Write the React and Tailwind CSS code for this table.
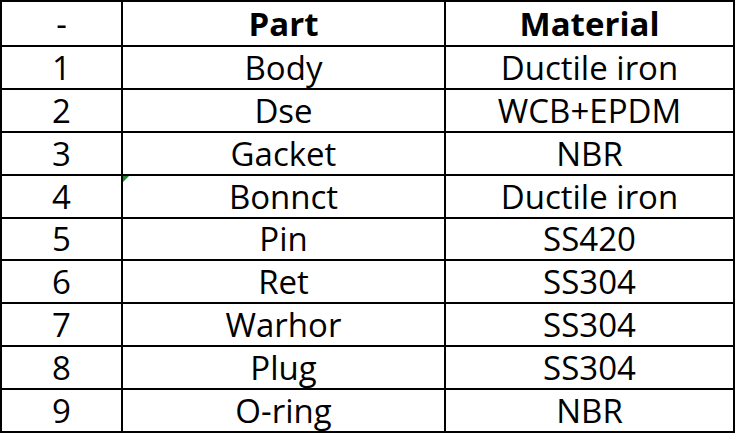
const rows = [
  ['1', 'Body', 'Ductile iron'],
  ['2', 'Dse', 'WCB+EPDM'],
  ['3', 'Gacket', 'NBR'],
  ['4', 'Bonnct', 'Ductile iron'],
  ['5', 'Pin', 'SS420'],
  ['6', 'Ret', 'SS304'],
  ['7', 'Warhor', 'SS304'],
  ['8', 'Plug', 'SS304'],
  ['9', 'O-ring', 'NBR'],
]

export default function App() {
  return (
    <div className="w-[735px] h-[433px] bg-white font-['Open_Sans',sans-serif] text-black">
      <div className="grid h-full grid-cols-[119px_321px_1fr] grid-rows-[43px_repeat(9,1fr)] gap-[2px] bg-black p-[2px] text-[33px] leading-none">
        <div className="flex items-center justify-center bg-white">-</div>
        <div className="flex items-center justify-center bg-white font-bold">Part</div>
        <div className="flex items-center justify-center bg-white font-bold">Material</div>
        {rows.map(([n, part, mat]) => (
          <div key={n} className="contents">
            <div className="flex items-center justify-center bg-white">{n}</div>
            <div className="relative flex items-center justify-center bg-white">
              {n === '4' && (
                <span className="absolute left-0 top-0 h-0 w-0 border-r-[6px] border-t-[6px] border-r-transparent border-t-[#1d8a2e]" />
              )}
              {part}
            </div>
            <div className="flex items-center justify-center bg-white">{mat}</div>
          </div>
        ))}
      </div>
    </div>
  )
}
